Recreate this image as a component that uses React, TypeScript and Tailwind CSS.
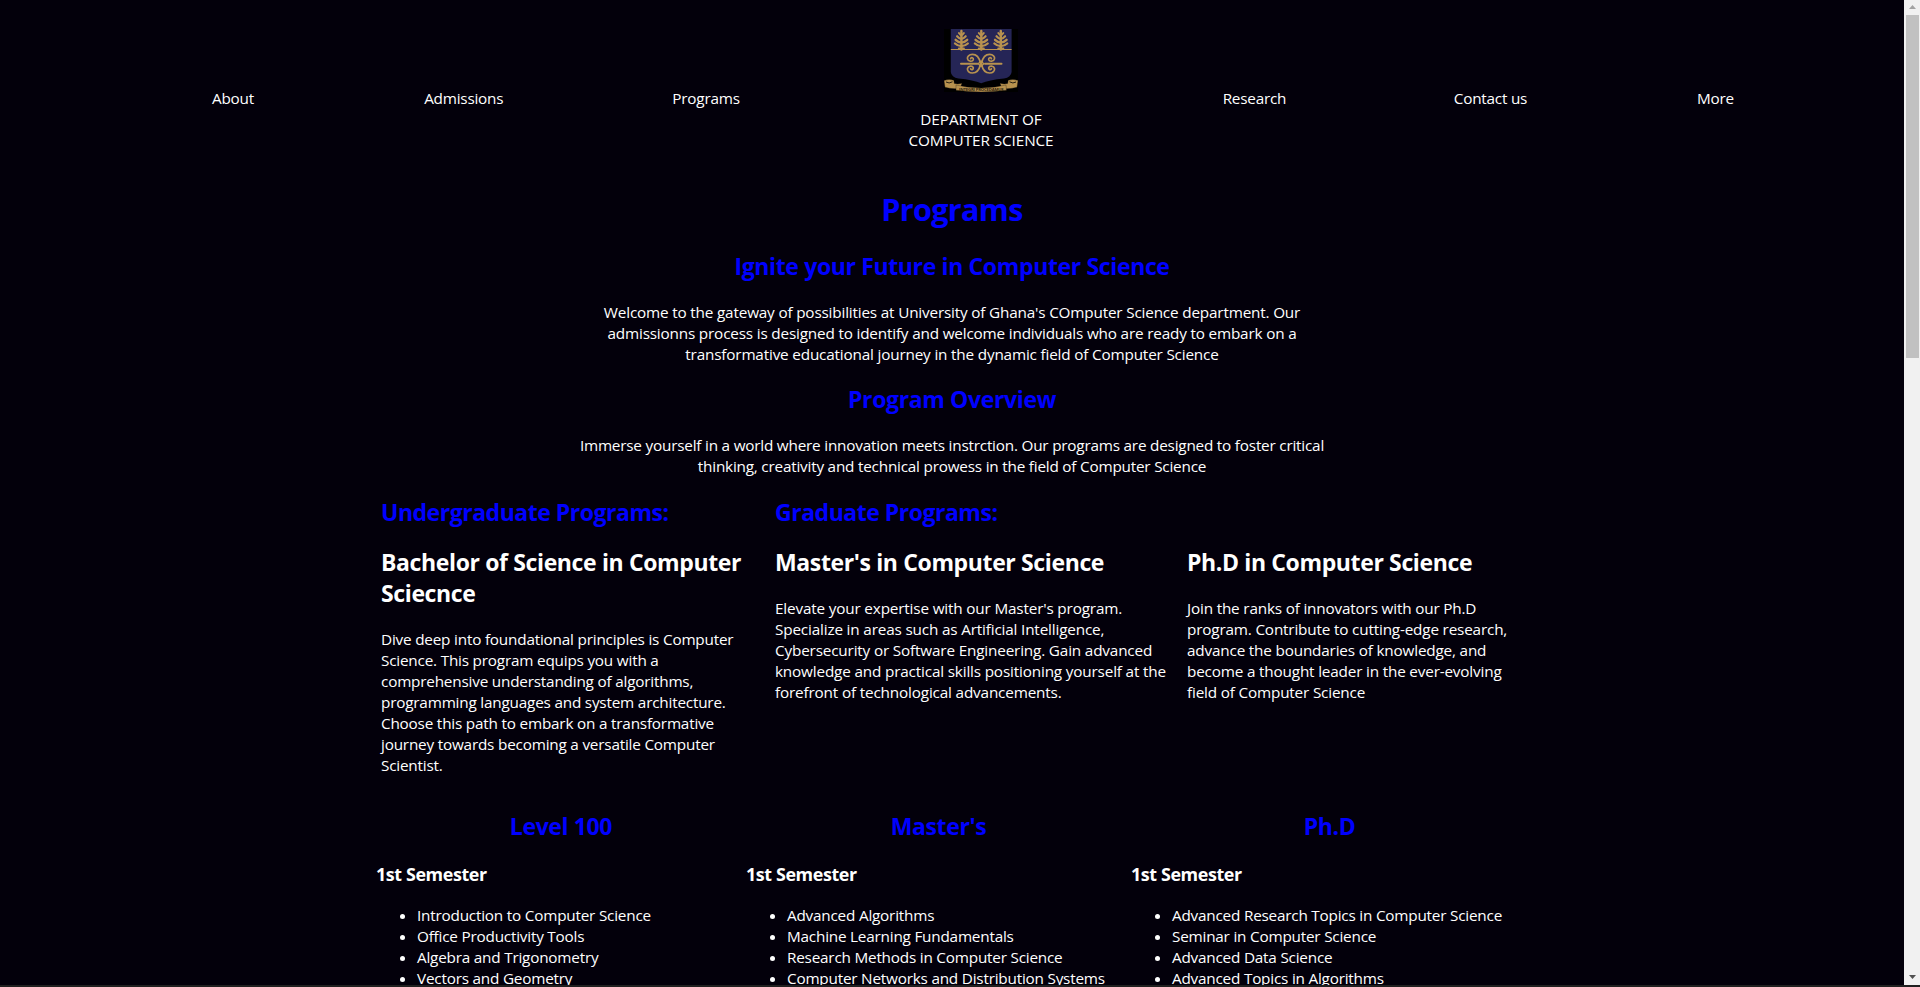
import { ReactNode } from "react";

const body = "text-[15.3px] leading-[21px] tracking-[-0.18px]";
const h2 = "text-[23px] leading-[31px] font-bold";

function Lines({ lines }: { lines: string[] }) {
  return (
    <>
      {lines.map((line) => (
        <span key={line} className="block whitespace-nowrap">
          {line}
        </span>
      ))}
    </>
  );
}

function NavLink({ width, children }: { width: string; children: ReactNode }) {
  return <a className={`${width} mt-[15px] block whitespace-nowrap tracking-[-0.22px]`}>{children}</a>;
}

function Tree({ x }: { x: number }) {
  return (
    <g transform={`translate(${x} 1)`} stroke="#b8924f" fill="none" strokeLinecap="round">
      <path d="M0 1V19.5" strokeWidth="2.4" />
      <path d="M-2.5 3Q-1 5.200 0 5.200Q1 5.200 2.500 3" strokeWidth="2" />
      <path d="M-4.300 6.200Q-2 8.800 0 8.900Q2 8.800 4.300 6.200" strokeWidth="2.2" />
      <path d="M-5.800 9.800Q-3 12.500 0 12.600Q3 12.500 5.800 9.800" strokeWidth="2.3" />
      <path d="M-6.400 13.500Q-3.500 16.100 0 16.200Q3.500 16.100 6.400 13.500" strokeWidth="2.3" />
      <path d="M-2.500 18.600H2.500" strokeWidth="2" />
    </g>
  );
}

function Scroll({ flip }: { flip: string }) {
  return (
    <path
      transform={`translate(37 34.7) scale(${flip})`}
      d="M0.500 -0.500C1.500 -5 4 -9.300 8.600 -9.300C12 -9.300 14 -7 13.500 -4.800C12.900 -2 8.400 -1.700 7.700 -4C7.300 -6 9.800 -6.800 10.400 -5"
    />
  );
}

function Crest() {
  return (
    <svg width="74" height="63" viewBox="0 0 74 63" className="block" aria-hidden="true">
      <rect width="74" height="63" fill="#000" />
      <path d="M6.800 0H67.600V43Q67 48.500 60 49.400Q45 50.800 37.200 54.200Q29.500 50.800 14.500 49.400Q7.300 48.500 6.800 43Z" fill="#252556" />
      <path d="M6.800 20.500H67.600" stroke="#b8924f" strokeWidth="1" />
      <Tree x={17.4} />
      <Tree x={37.3} />
      <Tree x={56.8} />
      <g stroke="#b8924f" strokeWidth="1.7" fill="none" strokeLinecap="round">
        <Scroll flip="1 1" />
        <Scroll flip="-1 1" />
        <Scroll flip="1 -1" />
        <Scroll flip="-1 -1" />
        <path d="M17 34.700H33.500M41 34.700H57.500" strokeWidth="2" />
        <path d="M37 31.900L39.800 34.700L37 37.500L34.200 34.700Z" strokeWidth="1.3" />
      </g>
      <g fill="#b8924f" stroke="#15120c" strokeWidth="0.3">
        <path d="M0 51.500Q5 49.500 9.800 51.300L10.300 54.500Q14 55.500 18 54.200L16 59.500Q7 60.300 1 58.300Z" />
        <path d="M74 51.500Q69 49.500 64.200 51.300L63.700 54.500Q60 55.500 56 54.200L58 59.500Q67 60.300 73 58.300Z" />
        <path d="M12 56Q24 59 37.200 59Q50 59 62 56L62.500 61.200Q50 63 37.200 63Q24 63 12 61.200Z" />
      </g>
      <g fill="none" stroke="#15120c" strokeWidth="0.9">
        <path d="M2 53Q5 55 8.500 52.800" />
        <path d="M72 53Q69 55 65.500 52.800" />
      </g>
      <text x="15" y="62.300" fontSize="4" fontWeight="700" textLength="44.500" lengthAdjust="spacingAndGlyphs" fill="#30240f">
        INTEGRI PROCEDAMUS
      </text>
    </svg>
  );
}

type Program = { heading?: string; title: string[]; text: string[]; width: string; tracking: string };

const programs: Program[] = [
  {
    heading: "Undergraduate Programs:",
    title: ["Bachelor of Science in Computer", "Sciecnce"],
    text: [
      "Dive deep into foundational principles is Computer",
      "Science. This program equips you with a",
      "comprehensive understanding of algorithms,",
      "programming languages and system architecture.",
      "Choose this path to embark on a transformative",
      "journey towards becoming a versatile Computer",
      "Scientist.",
    ],
    width: "w-[394px]",
    tracking: "tracking-[-0.2px]",
  },
  {
    heading: "Graduate Programs:",
    title: ["Master's in Computer Science"],
    text: [
      "Elevate your expertise with our Master's program.",
      "Specialize in areas such as Artificial Intelligence,",
      "Cybersecurity or Software Engineering. Gain advanced",
      "knowledge and practical skills positioning yourself at the",
      "forefront of technological advancements.",
    ],
    width: "w-[412px]",
    tracking: "tracking-[-0.17px]",
  },
  {
    title: ["Ph.D in Computer Science"],
    text: [
      "Join the ranks of innovators with our Ph.D",
      "program. Contribute to cutting-edge research,",
      "advance the boundaries of knowledge, and",
      "become a thought leader in the ever-evolving",
      "field of Computer Science",
    ],
    width: "w-[330px]",
    tracking: "tracking-[-0.18px]",
  },
];

const levels = [
  {
    name: "Level 100",
    width: "w-[370px]",
    courses: ["Introduction to Computer Science", "Office Productivity Tools", "Algebra and Trigonometry", "Vectors and Geometry"],
  },
  {
    name: "Master's",
    width: "w-[385px]",
    courses: [
      "Advanced Algorithms",
      "Machine Learning Fundamentals",
      "Research Methods in Computer Science",
      "Computer Networks and Distribution Systems",
    ],
  },
  {
    name: "Ph.D",
    width: "w-[397px]",
    courses: [
      "Advanced Research Topics in Computer Science",
      "Seminar in Computer Science",
      "Advanced Data Science",
      "Advanced Topics in Algorithms",
    ],
  },
];

function Scrollbar() {
  return (
    <div className="flex w-4 shrink-0 flex-col bg-[#f1f1f1]">
      <div className="flex h-[15px] items-center justify-center">
        <svg width="7" height="4" viewBox="0 0 7 4" className="mb-px block">
          <path d="M3.500 0L7 4H0Z" fill="#a3a3a3" />
        </svg>
      </div>
      <div className="ml-0.5 h-[343px] w-[13px] bg-[#c1c1c1]" />
      <div className="mt-auto flex h-[17px] items-center justify-center">
        <svg width="7" height="4" viewBox="0 0 7 4" className="block">
          <path d="M0 0H7L3.500 4Z" fill="#505050" />
        </svg>
      </div>
    </div>
  );
}

export default function App() {
  return (
    <div className="flex h-[987px] w-[1920px] flex-col overflow-hidden bg-[#202020] font-['Open_Sans','Noto_Sans',sans-serif] text-white">
      <div className="flex h-[985px]">
        <main className={`${body} h-[985px] flex-1 overflow-hidden bg-[#03000b]`}>
          <nav className="ml-[212px] mt-[29px] flex h-[123px] w-[1522px] items-center justify-between">
            <NavLink width="w-[43px]">About</NavLink>
            <NavLink width="w-[79px]">Admissions</NavLink>
            <NavLink width="w-[67px]">Programs</NavLink>
            <div className="flex h-[123px] w-[145px] flex-col items-center text-center">
              <Crest />
              <div className="mt-[17px] tracking-[-0.08px]">
                <Lines lines={["DEPARTMENT OF", "COMPUTER SCIENCE"]} />
              </div>
            </div>
            <NavLink width="w-[62px]">Research</NavLink>
            <NavLink width="w-[74px]">Contact us</NavLink>
            <NavLink width="w-[37px]">More</NavLink>
          </nav>

          <header className="mt-9 flex flex-col items-center text-center">
            <h1 className="text-[30.6px] leading-[42px] font-bold tracking-[-0.7px] text-[#0000ff]">Programs</h1>
            <h2 className={`${h2} mt-[21px] tracking-[-0.36px] text-[#0000ff]`}>Ignite your Future in Computer Science</h2>
            <p className="mt-5">
              <Lines
                lines={[
                  "Welcome to the gateway of possibilities at University of Ghana's COmputer Science department. Our",
                  "admissionns process is designed to identify and welcome individuals who are ready to embark on a",
                  "transformative educational journey in the dynamic field of Computer Science",
                ]}
              />
            </p>
            <h2 className={`${h2} mt-[19px] tracking-[-0.36px] text-[#0000ff]`}>Program Overview</h2>
            <p className="mt-5 tracking-[-0.21px]">
              <Lines
                lines={[
                  "Immerse yourself in a world where innovation meets instrction. Our programs are designed to foster critical",
                  "thinking, creativity and technical prowess in the field of Computer Science",
                ]}
              />
            </p>
          </header>

          <section className="ml-[381px] mt-5 flex h-[280px]">
            {programs.map((p) => (
              <article key={p.title[0]} className={`${p.width} shrink-0`}>
                <h2 className={`${h2} h-[31px] tracking-[-0.48px] text-[#0000ff]`}>{p.heading}</h2>
                <h2 className={`${h2} mt-[19px] tracking-[-0.37px]`}>
                  <Lines lines={p.title} />
                </h2>
                <p className={`${p.tracking} mt-5`}>
                  <Lines lines={p.text} />
                </p>
              </article>
            ))}
          </section>

          <section className="ml-[376px] mt-[34px] flex">
            {levels.map((l) => (
              <article key={l.name} className={`${l.width} shrink-0`}>
                <h2 className={`${h2} text-center tracking-[-0.38px] text-[#0000ff]`}>{l.name}</h2>
                <h3 className="mt-5 text-[17.9px] leading-[25px] font-bold tracking-[-0.4px]">1st Semester</h3>
                <ul className="mt-[18px] list-disc pl-[41px] tracking-[-0.21px]">
                  {l.courses.map((c) => (
                    <li key={c} className="whitespace-nowrap">
                      {c}
                    </li>
                  ))}
                </ul>
              </article>
            ))}
          </section>
        </main>
        <Scrollbar />
      </div>
    </div>
  );
}
